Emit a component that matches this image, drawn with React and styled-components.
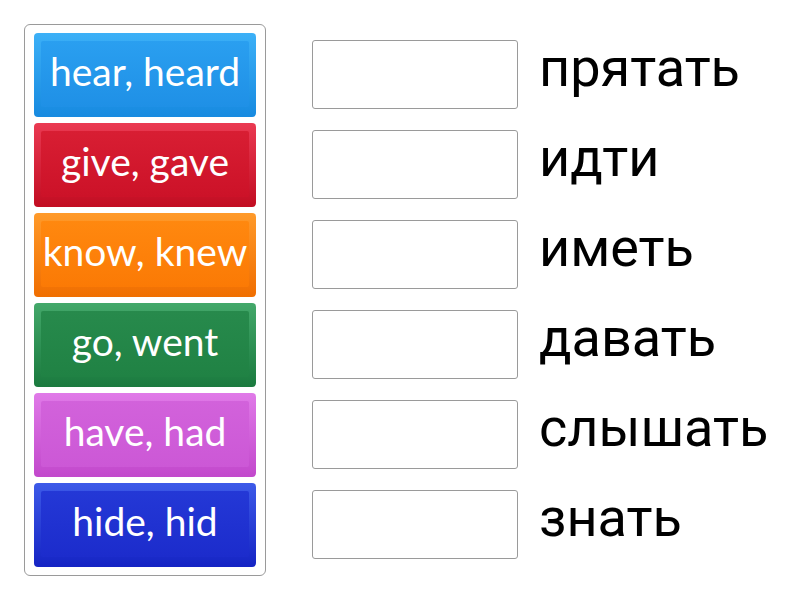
import React from "react";
import styled, { createGlobalStyle } from "styled-components";

const Global = createGlobalStyle`
  html, body { margin: 0; padding: 0; background: #fff; }
  #root { width: 800px; height: 600px; }
`;

const Page = styled.div`
  display: flex;
  align-items: flex-start;
  padding: 24px 0 0 24px;
  width: 800px;
  height: 600px;
  box-sizing: border-box;
`;

const Panel = styled.div`
  display: flex;
  flex-direction: column;
  gap: 6px;
  width: 242px;
  padding: 8px 9px;
  box-sizing: border-box;
  border: 1px solid #9a9a9a;
  border-radius: 6px;
`;

const Tile = styled.div`
  position: relative;
  height: 84px;
  border-radius: 4px;
  display: flex;
  align-items: center;
  justify-content: center;
  background: linear-gradient(${(p) => p.$rimTop}, ${(p) => p.$rimBottom});
  color: #fff;
  font-family: Lato, "Open Sans", sans-serif;
  font-size: 39px;
  white-space: nowrap;

  &::before {
    content: "";
    position: absolute;
    top: 8px;
    left: 7px;
    right: 7px;
    bottom: 10px;
    border-radius: 2px;
    background: linear-gradient(${(p) => p.$faceTop}, ${(p) => p.$faceBottom});
  }
`;

const TileText = styled.span`
  position: relative;
  padding-bottom: 9px;
`;

const Answers = styled.div`
  display: flex;
  flex-direction: column;
  gap: 21px;
  margin-left: 46px;
  padding-top: 16px;
`;

const Row = styled.div`
  display: flex;
  align-items: center;
  gap: 21px;
  height: 69px;
`;

const Slot = styled.div`
  width: 206px;
  height: 69px;
  box-sizing: border-box;
  border: 1px solid #9a9a9a;
  border-radius: 3px;
  background: #fff;
`;

const Word = styled.span`
  font-family: Roboto, "Liberation Sans", sans-serif;
  font-size: 54px;
  color: #000;
  line-height: 1;
  padding-bottom: 13px;
`;

const tiles = [
  { text: "hear, heard", rimTop: "#3cb0f7", rimBottom: "#178ae0", faceTop: "#2a9ff0", faceBottom: "#1f90e6" },
  { text: "give, gave", rimTop: "#ea3a52", rimBottom: "#c20d22", faceTop: "#d81e33", faceBottom: "#cc1228" },
  { text: "know, knew", rimTop: "#ff9a2a", rimBottom: "#f06e00", faceTop: "#ff880f", faceBottom: "#fb7a05" },
  { text: "go, went", rimTop: "#43a86a", rimBottom: "#1a7a3e", faceTop: "#278a4c", faceBottom: "#208244" },
  { text: "have, had", rimTop: "#e07ae8", rimBottom: "#c248cc", faceTop: "#d262db", faceBottom: "#cc58d6" },
  { text: "hide, hid", rimTop: "#3d5ae8", rimBottom: "#1524c4", faceTop: "#2438d6", faceBottom: "#1c2ccc" },
];

const words = ["прятать", "идти", "иметь", "давать", "слышать", "знать"];

export default function App() {
  return (
    <>
      <Global />
      <Page>
        <Panel>
          {tiles.map((t) => (
            <Tile
              key={t.text}
              $rimTop={t.rimTop}
              $rimBottom={t.rimBottom}
              $faceTop={t.faceTop}
              $faceBottom={t.faceBottom}
            >
              <TileText>{t.text}</TileText>
            </Tile>
          ))}
        </Panel>
        <Answers>
          {words.map((w) => (
            <Row key={w}>
              <Slot />
              <Word>{w}</Word>
            </Row>
          ))}
        </Answers>
      </Page>
    </>
  );
}
